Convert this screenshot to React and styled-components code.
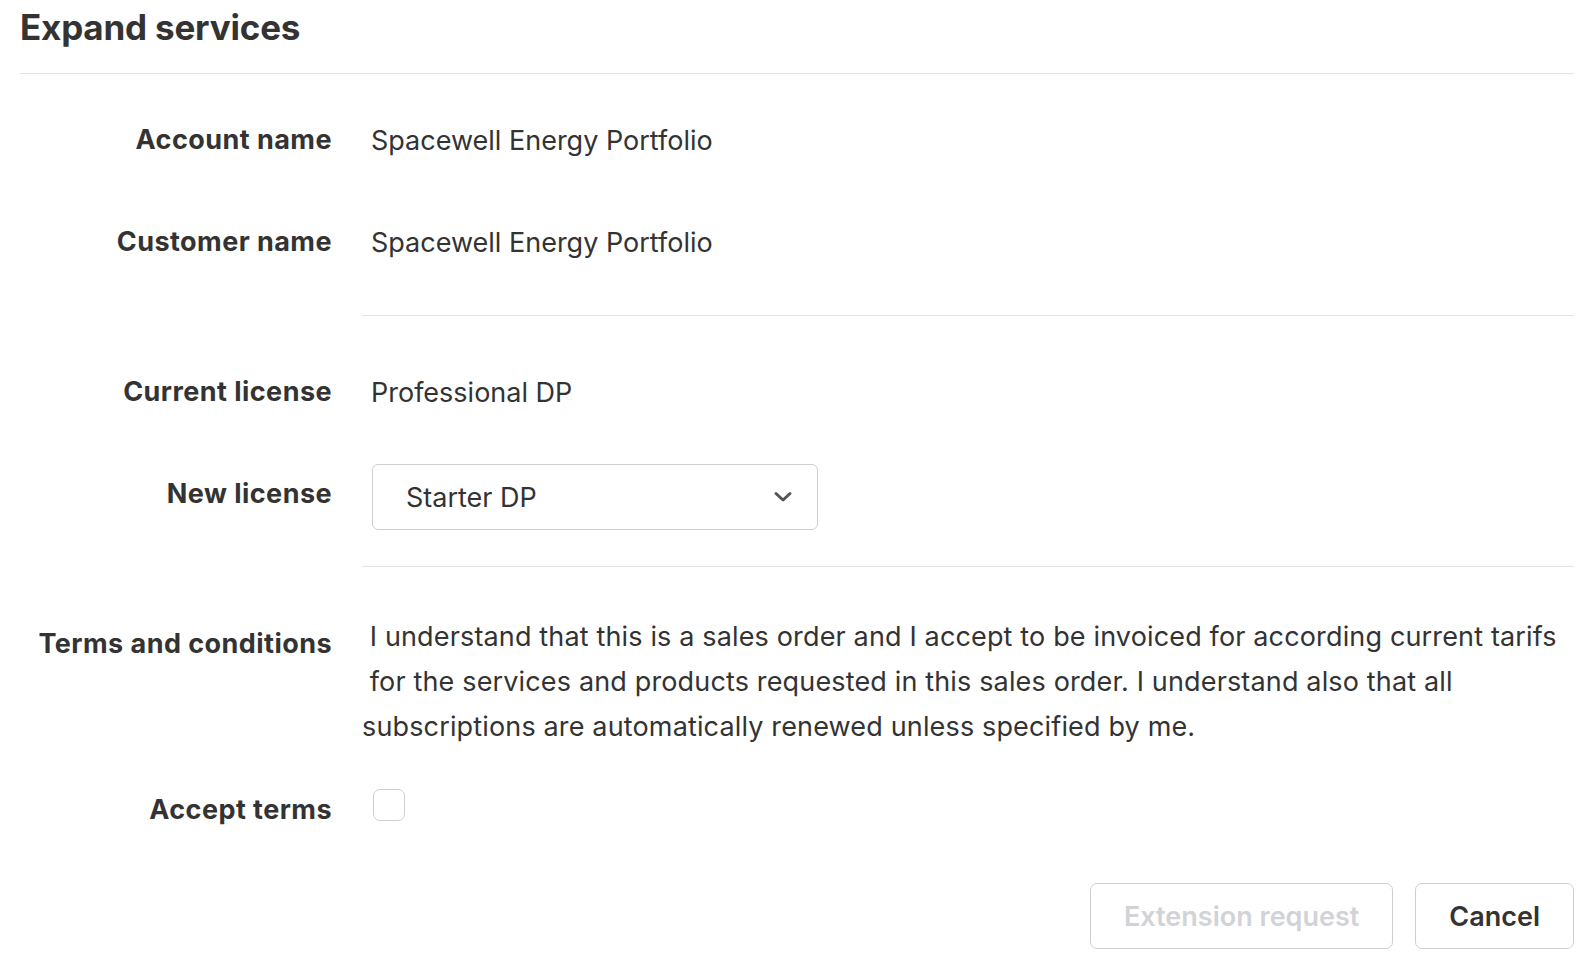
import React, { useState } from 'react'
import { styled, createGlobalStyle } from 'styled-components';

const GlobalStyle = createGlobalStyle`
  html, body {
    margin: 0;
    padding: 0;
    background: #fff;
  }
  body {
    font-family: Inter, "Noto Sans", "Liberation Sans", sans-serif;
    color: #333;
  }
`;

const Page = styled.main`
  padding: 0 20px 0 20px;
  width: 1594px;
  box-sizing: border-box;
`;

const Title = styled.h1`
  margin: 0;
  font-size: 35px;
  font-weight: 700;
  line-height: 55px;
  height: 73px;
  letter-spacing: -0.2px;
  color: #333;
  border-bottom: 1px solid #e4e4e4;
`;

const Section = styled.section`
  display: grid;
  grid-template-columns: 312px 1fr;
  column-gap: 30px;
  padding: ${(props) => props.padding};
`;

const Divider = styled.hr`
  margin: 0 0 0 342px;
  border: none;
  border-top: 1px solid #e4e4e4;
`;

const Label = styled.div`
  text-align: right;
  font-size: 27px;
  font-weight: 700;
  letter-spacing: 0.45px;
  height: ${(props) => props.height || '102px'};
  line-height: ${(props) => props.height || '102px'};
  margin-top: ${(props) => props.offset || '0'};
  white-space: nowrap;
`;

const Value = styled.div`
  display: flex;
  align-items: center;
  padding-left: 9px;
  font-size: 27px;
  height: ${(props) => props.height || '102px'};
  margin-top: ${(props) => props.offset || '0'};
`;

const SelectBox = styled.div`
  width: 446px;
  height: 66px;
  box-sizing: border-box;
  border: 1.5px solid #cfcfd2;
  border-radius: 6px;
  display: flex;
  align-items: center;
  justify-content: space-between;
  padding: 0 24px 0 33px;
  font-size: 27px;
  margin-left: 1px;
  margin-top: 6px;
`;

const Terms = styled.div`
  font-size: 27px;
  line-height: 45px;
  letter-spacing: 0.15px;
`;

const TermsLine = styled.span`
  display: block;
  white-space: pre;
`;

const Checkbox = styled.button`
  width: 32px;
  height: 32px;
  margin: 0 0 10px 2px;
  padding: 0;
  border: 1.5px solid #cfcfd2;
  border-radius: 7px;
  background: ${(props) => (props.checked ? '#333' : '#fff')};
  cursor: pointer;
`;

const Actions = styled.div`
  display: flex;
  justify-content: flex-end;
  gap: 22px;
  margin-top: 43px;
`;

const Button = styled.button`
  height: 66px;
  padding: 0 33px;
  box-sizing: border-box;
  background: #fff;
  border: 1.5px solid #cfcfd2;
  border-radius: 7px;
  font-family: inherit;
  font-size: 27px;
  font-weight: 600;
  color: ${(props) => (props.disabled ? '#d2d3d6' : '#333')};
  cursor: ${(props) => (props.disabled ? 'default' : 'pointer')};
`;

const Chevron = () => (
  <svg width="20" height="14" viewBox="0 0 20 14">
    <polyline points="3,3.5 10,10 17,3.5" fill="none" stroke="#555" strokeWidth="3" strokeLinecap="round" strokeLinejoin="round" />
  </svg>
);

const App = () => {
  const [accepted, setAccepted] = useState(false);

  return (
    <>
      <GlobalStyle />
      <Page>
        <Title>Expand services</Title>

        <Section padding="15px 0 22px">
          <Label>Account name</Label>
          <Value>Spacewell Energy Portfolio</Value>
          <Label>Customer name</Label>
          <Value>Spacewell Energy Portfolio</Value>
        </Section>
        <Divider />

        <Section padding="25px 0 21px">
          <Label>Current license</Label>
          <Value>Professional DP</Value>
          <Label>New license</Label>
          <Value>
            <SelectBox>
              <span>Starter DP</span>
              <Chevron />
            </SelectBox>
          </Value>
        </Section>
        <Divider />

        <Section padding="47px 0 0">
          <Label height="45px" offset="7px">Terms and conditions</Label>
          <Terms>
            <TermsLine> I understand that this is a sales order and I accept to be invoiced for according current tarifs</TermsLine>
            <TermsLine> for the services and products requested in this sales order. I understand also that all</TermsLine>
            <TermsLine>subscriptions are automatically renewed unless specified by me.</TermsLine>
          </Terms>
          <Label height="60px" offset="31px">Accept terms</Label>
          <Value height="60px" offset="31px">
            <Checkbox checked={accepted} onClick={() => setAccepted(!accepted)} />
          </Value>
        </Section>

        <Actions>
          <Button disabled={!accepted}>Extension request</Button>
          <Button>Cancel</Button>
        </Actions>
      </Page>
    </>
  )
}

export default App;
